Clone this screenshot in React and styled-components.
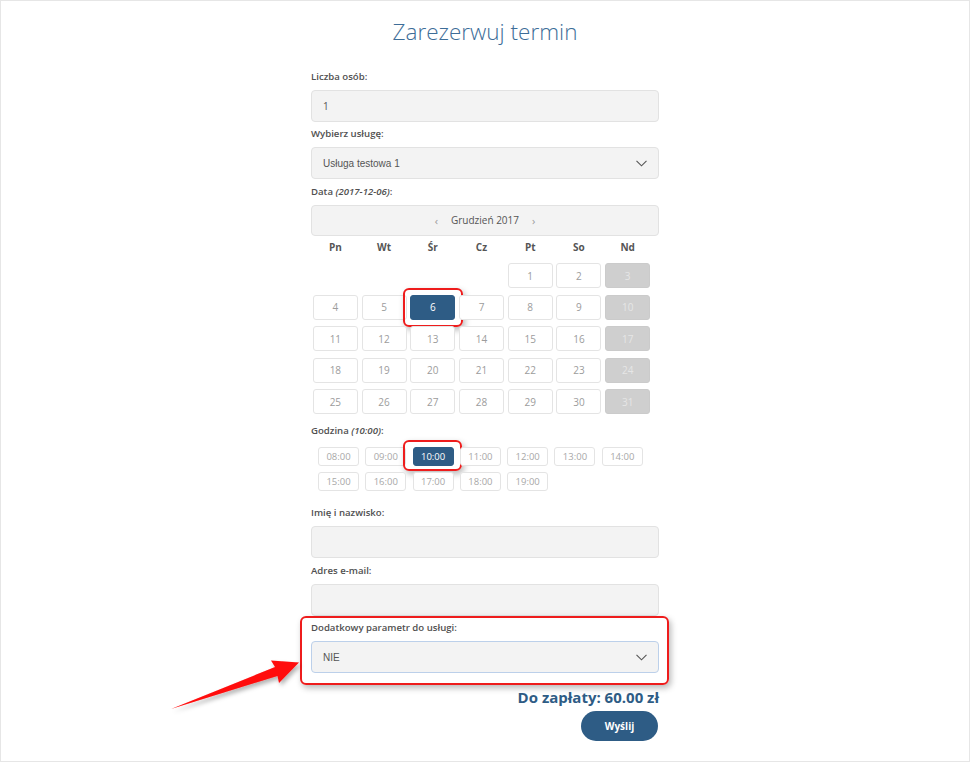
import styled, {createGlobalStyle} from 'styled-components'

const blue = '#2e5c85'

const Global = createGlobalStyle`
	body {
		margin: 0;
		font-family: "Open Sans", "DejaVu Sans", sans-serif;
		background: #fff;
	}
`

const Page = styled.div`
	position: relative;
	box-sizing: border-box;
	width: 970px;
	height: 762px;
	border: 1px solid #e6e6e6;
	padding-top: 16px;
	overflow: hidden;
`

const Title = styled.h1`
	margin: 0;
	text-align: center;
	font-size: 22.5px;
	font-weight: 300;
	line-height: 30px;
	color: #3d6d98;
`

const Form = styled.div`
	width: 348px;
	margin: 21.5px auto 0;
`

const Field = styled.div`
	position: relative;
	margin-top: ${({gap = 4.5}) => gap}px;
`

const Label = styled.div`
	font-size: 9.6px;
	font-weight: 600;
	line-height: 15px;
	color: #505050;
	margin-bottom: 6px;
`

const Input = styled.div`
	box-sizing: border-box;
	height: 32px;
	background: #f3f3f3;
	border: 1px solid ${({focused}) => focused ? '#bcd0ea' : '#e2e2e2'};
	border-radius: 4px;
	display: flex;
	align-items: center;
	justify-content: space-between;
	padding: 0 11px;
	font-size: 10px;
	color: #555;
`

const SelectText = styled.span`
	font-family: "Liberation Sans", Arial, sans-serif;
	font-size: 10px;
	color: #555;
`

const MonthBar = styled.div`
	box-sizing: border-box;
	height: 31px;
	background: #f3f3f3;
	border: 1px solid #e2e2e2;
	border-radius: 4px;
	display: flex;
	align-items: center;
	justify-content: center;
	gap: 9px;
	font-size: 10px;
	color: #555;
`

const MonthNav = styled.span`
	color: #999;
	font-size: 11px;
	padding: 0 4px;
`

const Week = styled.div`
	width: 341px;
	display: grid;
	grid-template-columns: repeat(7, 1fr);
`

const WeekDays = styled(Week)`
	margin-top: 4.5px;
	line-height: 14px;
	font-size: 10px;
	font-weight: 700;
	color: #555;
	text-align: center;
`

const Days = styled(Week)`
	margin-top: 9px;
	row-gap: 6.5px;
`

const Day = styled.div`
	position: relative;
	box-sizing: border-box;
	height: 25px;
	margin: 0 1.8px;
	border: 1px solid ${({kind}) => kind == 'sunday' ? '#cbcbcb' : kind == 'active' ? blue : '#e4e4e4'};
	border-radius: 3px;
	background: ${({kind}) => kind == 'sunday' ? '#cfcfcf' : kind == 'active' ? blue : '#fff'};
	color: ${({kind}) => kind == 'sunday' ? '#e6e6e6' : kind == 'active' ? '#fff' : '#9c9c9c'};
	font-size: 10px;
	display: flex;
	align-items: center;
	justify-content: center;
	visibility: ${({kind}) => kind == 'empty' ? 'hidden' : 'visible'};
`

// margin collapses with the label's 6px, so this is the full distance
const Slots = styled.div`
	display: flex;
	flex-wrap: wrap;
	gap: 6px 6.3px;
	padding-left: 7px;
	margin-top: 9.5px;
`

const Slot = styled.div`
	position: relative;
	box-sizing: border-box;
	width: 41px;
	height: 19px;
	border: 1px solid ${({active}) => active ? blue : '#e4e4e4'};
	border-radius: 3px;
	background: ${({active}) => active ? blue : '#fff'};
	color: ${({active}) => active ? '#fff' : '#a8a8a8'};
	font-size: 9.5px;
	display: flex;
	align-items: center;
	justify-content: center;
`

const Total = styled.div`
	margin-top: 13.5px;
	text-align: right;
	font-size: 15px;
	font-weight: 700;
	line-height: 20px;
	color: ${blue};
`

const Actions = styled.div`
	display: flex;
	justify-content: flex-end;
	margin-top: 4px;
`

const Button = styled.button`
	width: 77px;
	height: 30px;
	border: none;
	border-radius: 15px;
	background: ${blue};
	color: #fff;
	font-family: "Open Sans", sans-serif;
	font-weight: 700;
	font-size: 10px;
	margin-right: 1px;
`

const Highlight = styled.div`
	position: absolute;
	top: ${({box: [t]}) => t}px;
	right: ${({box: [, r]}) => r}px;
	bottom: ${({box: [, , b]}) => b}px;
	left: ${({box: [, , , l]}) => l}px;
	border: 2px solid #ee1c1c;
	border-radius: 6px;
	box-shadow: 2px 3px 6px rgba(0, 0, 0, .28);
	pointer-events: none;
`

const Arrow = styled.svg`
	position: absolute;
	left: 160px;
	top: 645px;
	overflow: visible;
`

const Chevron = () =>
	<svg width="11" height="7" viewBox="0 0 11 7">
		<polyline points="0.5,0.8 5.5,5.8 10.5,0.8" fill="none" stroke="#555" strokeWidth="1.1"/>
	</svg>

const weekDays = ['Pn', 'Wt', 'Śr', 'Cz', 'Pt', 'So', 'Nd']

const days = [...Array(4).fill(null), ...Array.from({length: 31}, (_, i) => i + 1)]

const slots = ['08:00', '09:00', '10:00', '11:00', '12:00', '13:00', '14:00', '15:00', '16:00', '17:00', '18:00', '19:00']

const dayKind = (day, index) =>
	day == null ? 'empty'
	: day == 6 ? 'active'
	: index % 7 == 6 ? 'sunday'
	: 'normal'

export default () => <>
	<Global/>
	<Page>
		<Title>Zarezerwuj termin</Title>
		<Form>
			<Field gap={0}>
				<Label>Liczba osób:</Label>
				<Input>1</Input>
			</Field>
			<Field>
				<Label>Wybierz usługę:</Label>
				<Input>
					<SelectText>Usługa testowa 1</SelectText>
					<Chevron/>
				</Input>
			</Field>
			<Field>
				<Label>Data <em>(2017-12-06)</em>:</Label>
				<MonthBar>
					<MonthNav>‹</MonthNav>
					<span>Grudzień 2017</span>
					<MonthNav>›</MonthNav>
				</MonthBar>
				<WeekDays>
					{weekDays.map(day => <div key={day}>{day}</div>)}
				</WeekDays>
				<Days>
					{days.map((day, index) =>
						<Day key={index} kind={dayKind(day, index)}>
							{day}
							{day == 6 && <Highlight box={[-8, -9, -8, -8]}/>}
						</Day>
					)}
				</Days>
			</Field>
			<Field gap={8.5}>
				<Label>Godzina <em>(10:00)</em>:</Label>
				<Slots>
					{slots.map(slot =>
						<Slot key={slot} active={slot == '10:00'}>
							{slot}
							{slot == '10:00' && <Highlight box={[-8, -9, -6, -11]}/>}
						</Slot>
					)}
				</Slots>
			</Field>
			<Field gap={14}>
				<Label>Imię i nazwisko:</Label>
				<Input/>
			</Field>
			<Field gap={4.5}>
				<Label>Adres e-mail:</Label>
				<Input/>
			</Field>
			<Field gap={4.5}>
				<Label>Dodatkowy parametr do usługi:</Label>
				<Input focused>
					<SelectText>NIE</SelectText>
					<Chevron/>
				</Input>
				<Highlight box={[-4, -10, -12, -11]}/>
			</Field>
			<Total>Do zapłaty: 60.00 zł</Total>
			<Actions>
				<Button>Wyślij</Button>
			</Actions>
		</Form>
		<Arrow width="150" height="75" viewBox="0 0 150 75">
			<defs>
				<filter id="shadow" x="-20%" y="-40%" width="140%" height="200%">
					<feDropShadow dx="2" dy="3" stdDeviation="2" floodColor="#000" floodOpacity=".3"/>
				</filter>
			</defs>
			<polygon
				points="10,63 114,21 110,14.5 138,16.5 118,37 116.5,30"
				fill="#ff0a0a"
				filter="url(#shadow)"
			/>
		</Arrow>
	</Page>
</>
